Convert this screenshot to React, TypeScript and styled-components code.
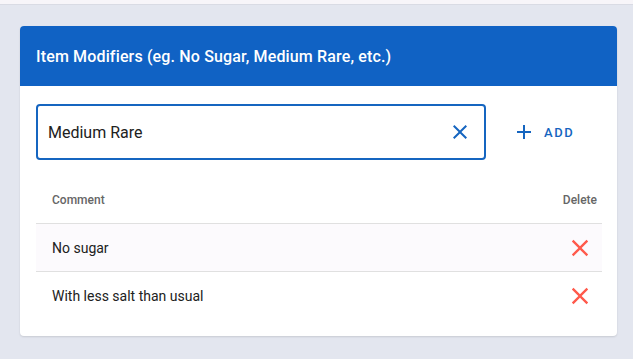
import React from "react";
import styled, { createGlobalStyle } from "styled-components";

const Global = createGlobalStyle`
  html, body { margin: 0; padding: 0; }
  body {
    background: #e3e6ef;
    font-family: Roboto, "Liberation Sans", sans-serif;
    width: 633px;
    height: 359px;
    overflow: hidden;
  }
`;

const TopStrip = styled.div`
  height: 4px;
  background: #f7f5f9;
  border-bottom: 1px solid #d9dbe4;
`;

const Page = styled.div`
  padding: 21px 16px 0 20px;
`;

const Card = styled.section`
  width: 597px;
  background: #fff;
  border-radius: 4px;
  overflow: hidden;
  box-shadow: 0 1px 2px rgba(0, 0, 0, 0.12);
`;

const Header = styled.header`
  height: 60px;
  background: #1062c4;
  color: #fff;
  display: flex;
  align-items: center;
  padding: 0 16px;
  font-size: 16px;
  font-weight: 500;
  letter-spacing: 0.15px;
`;

const Body = styled.div`
  padding: 18px 15px 16px 16px;
`;

const InputRow = styled.div`
  display: flex;
  align-items: center;
`;

const Field = styled.div`
  width: 450px;
  height: 56px;
  box-sizing: border-box;
  border: 2px solid #1565c0;
  border-radius: 4px;
  display: flex;
  align-items: center;
  padding: 0 12px 0 10px;
`;

const FieldText = styled.span`
  flex: 1;
  font-size: 16px;
  color: #212121;
`;

const AddButton = styled.button`
  margin-left: 18px;
  display: flex;
  align-items: center;
  gap: 8px;
  background: none;
  border: none;
  padding: 6px 8px;
  color: #1565c0;
  font-family: Roboto, "Liberation Sans", sans-serif;
  font-size: 13px;
  font-weight: 500;
  letter-spacing: 1.6px;
`;

const Table = styled.div`
  margin-top: 16px;
  width: 566px;
`;

const HeadRow = styled.div`
  height: 48px;
  display: flex;
  align-items: center;
  justify-content: space-between;
  padding: 0 5px 0 16px;
  font-size: 12px;
  font-weight: 500;
  color: #666;
  border-bottom: 1px solid #e0e0e0;
  box-sizing: border-box;
`;

const Row = styled.div<{ $shaded?: boolean }>`
  height: 48px;
  display: flex;
  align-items: center;
  justify-content: space-between;
  padding: 0 8px 0 16px;
  font-size: 14px;
  color: #212121;
  background: ${(p) => (p.$shaded ? "#fcfafd" : "#fff")};
  border-bottom: ${(p) => (p.$shaded ? "1px solid #e0e0e0" : "none")};
  box-sizing: border-box;
`;

const Close = ({ color, size = 24 }: { color: string; size?: number }) => (
  <svg width={size} height={size} viewBox="0 0 24 24">
    <path
      d="M19 6.41 17.59 5 12 10.59 6.41 5 5 6.41 10.59 12 5 17.59 6.41 19 12 13.41 17.59 19 19 17.59 13.41 12z"
      fill={color}
    />
  </svg>
);

const Plus = () => (
  <svg width="24" height="24" viewBox="0 0 24 24">
    <path d="M19 13h-6v6h-2v-6H5v-2h6V5h2v6h6v2z" fill="#1565c0" />
  </svg>
);

const rows = ["No sugar", "With less salt than usual"];

export default function App() {
  return (
    <>
      <Global />
      <TopStrip />
      <Page>
        <Card>
          <Header>Item Modifiers (eg. No Sugar, Medium Rare, etc.)</Header>
          <Body>
            <InputRow>
              <Field>
                <FieldText>Medium Rare</FieldText>
                <Close color="#1565c0" />
              </Field>
              <AddButton>
                <Plus />
                ADD
              </AddButton>
            </InputRow>
            <Table>
              <HeadRow>
                <span>Comment</span>
                <span>Delete</span>
              </HeadRow>
              {rows.map((r, i) => (
                <Row key={r} $shaded={i === 0}>
                  <span>{r}</span>
                  <Close color="#ff5a4c" size={28} />
                </Row>
              ))}
            </Table>
          </Body>
        </Card>
      </Page>
    </>
  );
}
